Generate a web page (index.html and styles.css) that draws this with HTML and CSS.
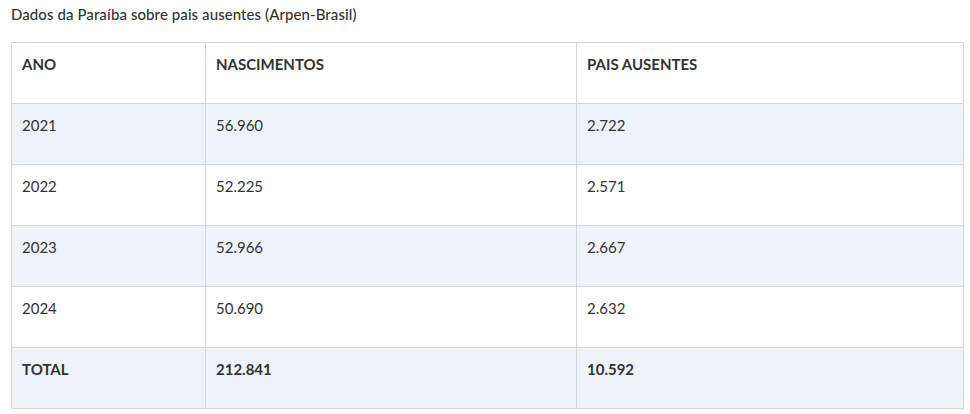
FILE: index.html
```html
<!DOCTYPE html>
<html lang="pt-BR">
<head>
<meta charset="utf-8">
<title>Dados da Paraíba sobre pais ausentes</title>
<link rel="stylesheet" href="styles.css">
</head>
<body>
<figure class="figure">
  <figcaption class="caption">Dados da Paraíba sobre pais ausentes (Arpen-Brasil)</figcaption>
  <table class="data">
    <colgroup>
      <col class="c1">
      <col class="c2">
      <col class="c3">
    </colgroup>
    <thead>
      <tr><th>ANO</th><th>NASCIMENTOS</th><th>PAIS AUSENTES</th></tr>
    </thead>
    <tbody>
      <tr class="alt"><td>2021</td><td>56.960</td><td>2.722</td></tr>
      <tr><td>2022</td><td>52.225</td><td>2.571</td></tr>
      <tr class="alt"><td>2023</td><td>52.966</td><td>2.667</td></tr>
      <tr><td>2024</td><td>50.690</td><td>2.632</td></tr>
      <tr class="alt total"><td>TOTAL</td><td>212.841</td><td>10.592</td></tr>
    </tbody>
  </table>
</figure>
</body>
</html>
```
FILE: styles.css
```css
html, body {
  margin: 0;
  padding: 0;
  background: #ffffff;
}
body {
  font-family: Lato, "Liberation Sans", sans-serif;
  color: #333333;
}
.figure {
  margin: 0;
  padding: 4px 7px 0 11px;
}
.caption {
  font-size: 15px;
  font-weight: 500;
  letter-spacing: 0.08px;
  line-height: 20px;
  color: #333333;
  margin-bottom: 18px;
}
.data {
  border-collapse: collapse;
  width: 952px;
  table-layout: fixed;
  font-size: 15px;
}
.c1 { width: 194px; }
.c2 { width: 371px; }
.c3 { width: 387px; }
.data th,
.data td {
  border: 1px solid #d6d6d6;
  text-align: left;
  vertical-align: top;
  padding: 11px 10px 0 10px;
  height: 49px;
  line-height: 20px;
}
.data th {
  font-weight: 700;
}
.data td {
  font-weight: 400;
}
.alt td {
  background: #eef3fa;
}
.total td {
  font-weight: 700;
}
```
